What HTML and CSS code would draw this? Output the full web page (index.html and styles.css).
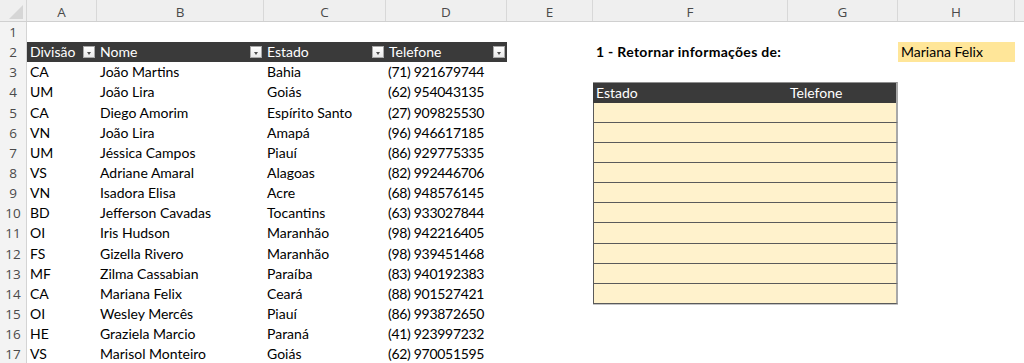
FILE: index.html
```html
<!DOCTYPE html>
<html lang="pt">
<head>
<meta charset="utf-8">
<title>Planilha</title>
<link rel="stylesheet" href="styles.css">
</head>
<body>
<div class="sheet">
  <div class="row colhead">
    <div class="corner"><svg width="26" height="21" viewBox="0 0 26 21"><polygon points="23,5 23,19 9,19" fill="#d6d6d6"/></svg></div>
    <div class="h">A</div><div class="h">B</div><div class="h">C</div><div class="h">D</div><div class="h">E</div><div class="h">F</div><div class="h">G</div><div class="h">H</div><div class="h last"></div>
  </div>

  <div class="row"><div class="rn">1</div><div class="c"></div><div class="c"></div><div class="c"></div><div class="c"></div><div class="c"></div><div class="c"></div><div class="c"></div><div class="c"></div><div class="c"></div></div>

  <div class="row"><div class="rn">2</div>
    <div class="c th">Divisão<span class="fb"></span></div>
    <div class="c th">Nome<span class="fb"></span></div>
    <div class="c th">Estado<span class="fb"></span></div>
    <div class="c th">Telefone<span class="fb"></span></div>
    <div class="c"></div>
    <div class="c bold">1 - Retornar informações de:</div>
    <div class="c"></div>
    <div class="c pick">Mariana Felix</div>
    <div class="c"></div>
  </div>

  <div class="row"><div class="rn">3</div><div class="c">CA</div><div class="c">João Martins</div><div class="c">Bahia</div><div class="c tel">(71) 921679744</div><div class="c"></div><div class="c"></div><div class="c"></div><div class="c"></div><div class="c"></div></div>

  <div class="row"><div class="rn">4</div><div class="c">UM</div><div class="c">João Lira</div><div class="c">Goiás</div><div class="c tel">(62) 954043135</div><div class="c"></div><div class="c rh rh-f">Estado</div><div class="c rh rh-g">Telefone</div><div class="c"></div><div class="c"></div></div>

  <div class="row"><div class="rn">5</div><div class="c">CA</div><div class="c">Diego Amorim</div><div class="c">Espírito Santo</div><div class="c tel">(27) 909825530</div><div class="c"></div><div class="c rb rb-f"></div><div class="c rb rb-g"></div><div class="c"></div><div class="c"></div></div>

  <div class="row"><div class="rn">6</div><div class="c">VN</div><div class="c">João Lira</div><div class="c">Amapá</div><div class="c tel">(96) 946617185</div><div class="c"></div><div class="c rb rb-f"></div><div class="c rb rb-g"></div><div class="c"></div><div class="c"></div></div>

  <div class="row"><div class="rn">7</div><div class="c">UM</div><div class="c">Jéssica Campos</div><div class="c">Piauí</div><div class="c tel">(86) 929775335</div><div class="c"></div><div class="c rb rb-f"></div><div class="c rb rb-g"></div><div class="c"></div><div class="c"></div></div>

  <div class="row"><div class="rn">8</div><div class="c">VS</div><div class="c">Adriane Amaral</div><div class="c">Alagoas</div><div class="c tel">(82) 992446706</div><div class="c"></div><div class="c rb rb-f"></div><div class="c rb rb-g"></div><div class="c"></div><div class="c"></div></div>

  <div class="row"><div class="rn">9</div><div class="c">VN</div><div class="c">Isadora Elisa</div><div class="c">Acre</div><div class="c tel">(68) 948576145</div><div class="c"></div><div class="c rb rb-f"></div><div class="c rb rb-g"></div><div class="c"></div><div class="c"></div></div>

  <div class="row"><div class="rn">10</div><div class="c">BD</div><div class="c">Jefferson Cavadas</div><div class="c">Tocantins</div><div class="c tel">(63) 933027844</div><div class="c"></div><div class="c rb rb-f"></div><div class="c rb rb-g"></div><div class="c"></div><div class="c"></div></div>

  <div class="row"><div class="rn">11</div><div class="c">OI</div><div class="c">Iris Hudson</div><div class="c">Maranhão</div><div class="c tel">(98) 942216405</div><div class="c"></div><div class="c rb rb-f"></div><div class="c rb rb-g"></div><div class="c"></div><div class="c"></div></div>

  <div class="row"><div class="rn">12</div><div class="c">FS</div><div class="c">Gizella Rivero</div><div class="c">Maranhão</div><div class="c tel">(98) 939451468</div><div class="c"></div><div class="c rb rb-f"></div><div class="c rb rb-g"></div><div class="c"></div><div class="c"></div></div>

  <div class="row"><div class="rn">13</div><div class="c">MF</div><div class="c">Zilma Cassabian</div><div class="c">Paraíba</div><div class="c tel">(83) 940192383</div><div class="c"></div><div class="c rb rb-f"></div><div class="c rb rb-g"></div><div class="c"></div><div class="c"></div></div>

  <div class="row"><div class="rn">14</div><div class="c">CA</div><div class="c">Mariana Felix</div><div class="c">Ceará</div><div class="c tel">(88) 901527421</div><div class="c"></div><div class="c rb rb-f rb-last"></div><div class="c rb rb-g rb-last"></div><div class="c"></div><div class="c"></div></div>

  <div class="row"><div class="rn">15</div><div class="c">OI</div><div class="c">Wesley Mercês</div><div class="c">Piauí</div><div class="c tel">(86) 993872650</div><div class="c"></div><div class="c"></div><div class="c"></div><div class="c"></div><div class="c"></div></div>

  <div class="row"><div class="rn">16</div><div class="c">HE</div><div class="c">Graziela Marcio</div><div class="c">Paraná</div><div class="c tel">(41) 923997232</div><div class="c"></div><div class="c"></div><div class="c"></div><div class="c"></div><div class="c"></div></div>

  <div class="row"><div class="rn">17</div><div class="c">VS</div><div class="c">Marisol Monteiro</div><div class="c">Goiás</div><div class="c tel">(62) 970051595</div><div class="c"></div><div class="c"></div><div class="c"></div><div class="c"></div><div class="c"></div></div>
</div>
</body>
</html>
```

FILE: styles.css
```css
* { box-sizing: border-box; }

html, body {
  margin: 0;
  padding: 0;
  background: #ffffff;
}

body {
  width: 1024px;
  height: 363px;
  overflow: hidden;
  font-family: Lato, "Liberation Sans", sans-serif;
  font-size: 14px;
  color: #000000;
}

.sheet {
  display: flex;
  flex-direction: column;
}

.row {
  display: grid;
  grid-template-columns: 27px 70px 167px 122px 121px 86px 195px 110px 117px 1fr;
  grid-template-rows: minmax(0, 1fr);
  height: 20.15px;
  flex: none;
}

/* column header band */
.row.colhead {
  height: 22px;
  background: #efefef;
  border-bottom: 1px solid #d0d0d0;
}

.corner {
  border-right: 1px solid #d6d6d6;
}

.corner svg { display: block; }

.h {
  border-right: 1px solid #d8d8d8;
  text-align: center;
  font-family: "Open Sans", "Noto Sans", sans-serif;
  font-size: 13.5px;
  color: #4a4a4a;
  padding-top: 3px;
  line-height: 19px;
}

.h.last { border-right: none; }

/* row numbers */
.rn {
  background: #f3f3f3;
  border-right: 1px solid #d4d4d4;
  text-align: center;
  font-family: "Open Sans", "Noto Sans", sans-serif;
  font-size: 13.5px;
  color: #4a4a4a;
  line-height: 20px;
}

/* cells */
.c {
  padding: 0 3px;
  line-height: 20px;
  white-space: nowrap;
  min-width: 0;
}

.c.tel {
  padding-left: 2px;
  letter-spacing: -0.3px;
}

.bold {
  font-weight: 700;
  letter-spacing: 0.3px;
}

.pick { background: #ffe699; }

/* left table header */
.th {
  background: #3a3a3a;
  color: #ffffff;
  display: flex;
  align-items: center;
  justify-content: space-between;
  padding-right: 2px;
}

.fb {
  position: relative;
  flex: none;
  width: 12px;
  height: 12px;
  border: 1px solid #a8a8a8;
  background: linear-gradient(#ffffff, #e9e9e9);
}

.fb::after {
  content: "";
  position: absolute;
  left: 3px;
  top: 5px;
  border-left: 2.5px solid transparent;
  border-right: 2.5px solid transparent;
  border-top: 3px solid #4d4d4d;
}

/* right table */
.rh {
  background: #3a3a3a;
  color: #ffffff;
  border-top: 1px solid #8f8f8f;
  line-height: 19px;
}

.rh-g {
  padding-left: 2px;
  border-right: 2px solid #a8a8a8;
}

.rb {
  background: #fff2cc;
  border-bottom: 1px solid #5a5a5a;
}

.rb-f { border-left: 1px solid #5a5a5a; }

.rb-g { border-right: 2px solid #a8a8a8; }

.rb-last { box-shadow: 0 1px 0 #c4c4c4; }
```
